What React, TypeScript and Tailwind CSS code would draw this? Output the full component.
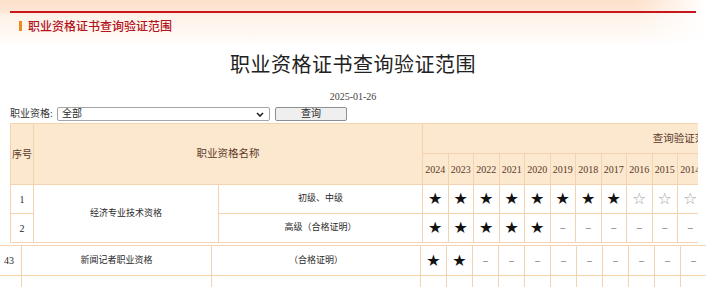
import React from "react";

const YEARS1 = Array.from({ length: 21 }, (_, i) => 2024 - i);
const YEARS2 = Array.from({ length: 12 }, (_, i) => 2024 - i);

function Mark({ v }: { v: "f" | "h" | "d" }) {
  if (v === "f")
    return <span className="font-['DejaVu_Sans',sans-serif] text-[16px] leading-none text-[#111]">★</span>;
  if (v === "h")
    return <span className="font-['DejaVu_Sans',sans-serif] text-[16px] leading-none text-[#a6a6a6]">☆</span>;
  return <span className="text-[10px] leading-none text-[#555]">–</span>;
}

function row(filled: number, rest: "h" | "d", n: number): ("f" | "h" | "d")[] {
  return Array.from({ length: n }, (_, i) => (i < filled ? "f" : rest));
}

export default function App() {
  const r1 = row(8, "h", 21);
  const r2 = row(5, "d", 21);
  const r3 = row(2, "d", 12);
  const cell = "flex items-center justify-center";
  const hd = "bg-[#fce7cf] text-[#5a3a28]";
  return (
    <div className="w-[706px] h-[287px] overflow-hidden bg-white font-['Liberation_Serif','Noto_Sans_CJK_SC',serif] text-[#2a2a2a]">
      <div className="h-[44px] pt-[11px] bg-[linear-gradient(to_right,rgba(255,255,255,0)_90%,#ffffff_100%),linear-gradient(to_bottom,#fde1cb_0px,#fde6d4_11px,#fef2e8_15px,#fff8f3_34px,#ffffff_46px)]">
        <div className="mx-[10px] h-[2px] bg-[#c8161d]" />
        <div className="flex items-center ml-[19px] mt-[6px] h-[14px]">
          <span className="w-[3px] h-[10px] bg-[#f08a1c]" />
          <span className="ml-[6px] text-[12px] leading-[14px] font-medium text-[#b3141d] font-['Noto_Sans_CJK_SC',sans-serif]">
            职业资格证书查询验证范围
          </span>
        </div>
      </div>

      <div className="mt-[6px] h-[28px] text-center text-[20px] leading-[28px] tracking-[0.5px] font-normal text-[#222] font-['Noto_Sans_CJK_SC',serif]">
        职业资格证书查询验证范围
      </div>

      <div className="mt-[13px] h-[12px] text-center text-[10px] leading-[12px] text-[#444]">2025-01-26</div>

      <div className="mt-[4px] ml-[10px] flex items-center h-[14px]">
        <span className="w-[47px] text-[10px] leading-[14px] whitespace-nowrap text-[#333]">职业资格:</span>
        <div className="w-[213px] h-[14px] border border-[#a5a5a5] rounded-[2px] bg-white flex items-center justify-between pl-[4px] pr-[5px]">
          <span className="text-[10px] leading-none">全部</span>
          <svg width="8" height="5" viewBox="0 0 8 5">
            <path d="M1 1 L4 4 L7 1" fill="none" stroke="#222" strokeWidth="1.6" />
          </svg>
        </div>
        <div className="ml-[5px] w-[72px] h-[14px] border border-[#8f8f8f] rounded-[2px] bg-[#efefef] flex items-center justify-center text-[10px] leading-none">
          查询
        </div>
      </div>

      <div className="mt-[2px] ml-[10px] w-[688px] overflow-hidden">
        <div className="w-max grid bg-[#f4d3b1] p-px gap-px grid-cols-[22px_184px_203px_repeat(21,24.5px)] grid-rows-[29px_30px_28px_28px]">
          <div className={`${cell} ${hd} row-span-2 text-[10px]`}>序号</div>
          <div className={`${cell} ${hd} row-span-2 col-span-2 text-[10.5px]`}>职业资格名称</div>
          <div className={`${cell} ${hd} col-span-21 text-[10.5px] pr-[12px]`}>查询验证范围</div>
          {YEARS1.map((y) => (
            <div key={y} className={`${cell} ${hd} text-[10px]`}>{y}</div>
          ))}
          <div className={`${cell} bg-white text-[10px]`}>1</div>
          <div className={`${cell} bg-white row-span-2 text-[9px]`}>经济专业技术资格</div>
          <div className={`${cell} bg-white text-[9px]`}>初级、中级</div>
          {r1.map((v, i) => (
            <div key={"a" + i} className={`${cell} bg-white`}><Mark v={v} /></div>
          ))}
          <div className={`${cell} bg-white text-[10px]`}>2</div>
          <div className={`${cell} bg-white text-[9px]`}>高级（合格证明）</div>
          {r2.map((v, i) => (
            <div key={"b" + i} className={`${cell} bg-white`}><Mark v={v} /></div>
          ))}
        </div>
      </div>

      <div className="mt-[2px] w-[706px] overflow-hidden">
        <div className="w-max grid bg-[#f4d3b1] pt-px gap-px grid-cols-[21px_189px_208px_repeat(12,25px)] grid-rows-[29px_30px]">
          <div className={`${cell} bg-white text-[10px] pr-[3px]`}>43</div>
          <div className={`${cell} bg-white text-[9px]`}>新闻记者职业资格</div>
          <div className={`${cell} bg-white text-[9px]`}>（合格证明）</div>
          {r3.map((v, i) => (
            <div key={"c" + i} className={`${cell} bg-white`}><Mark v={v} /></div>
          ))}
          <div className="bg-white" />
          <div className="bg-white" />
          <div className="bg-white" />
          {YEARS2.map((y) => (
            <div key={"e" + y} className="bg-white" />
          ))}
        </div>
      </div>
    </div>
  );
}
